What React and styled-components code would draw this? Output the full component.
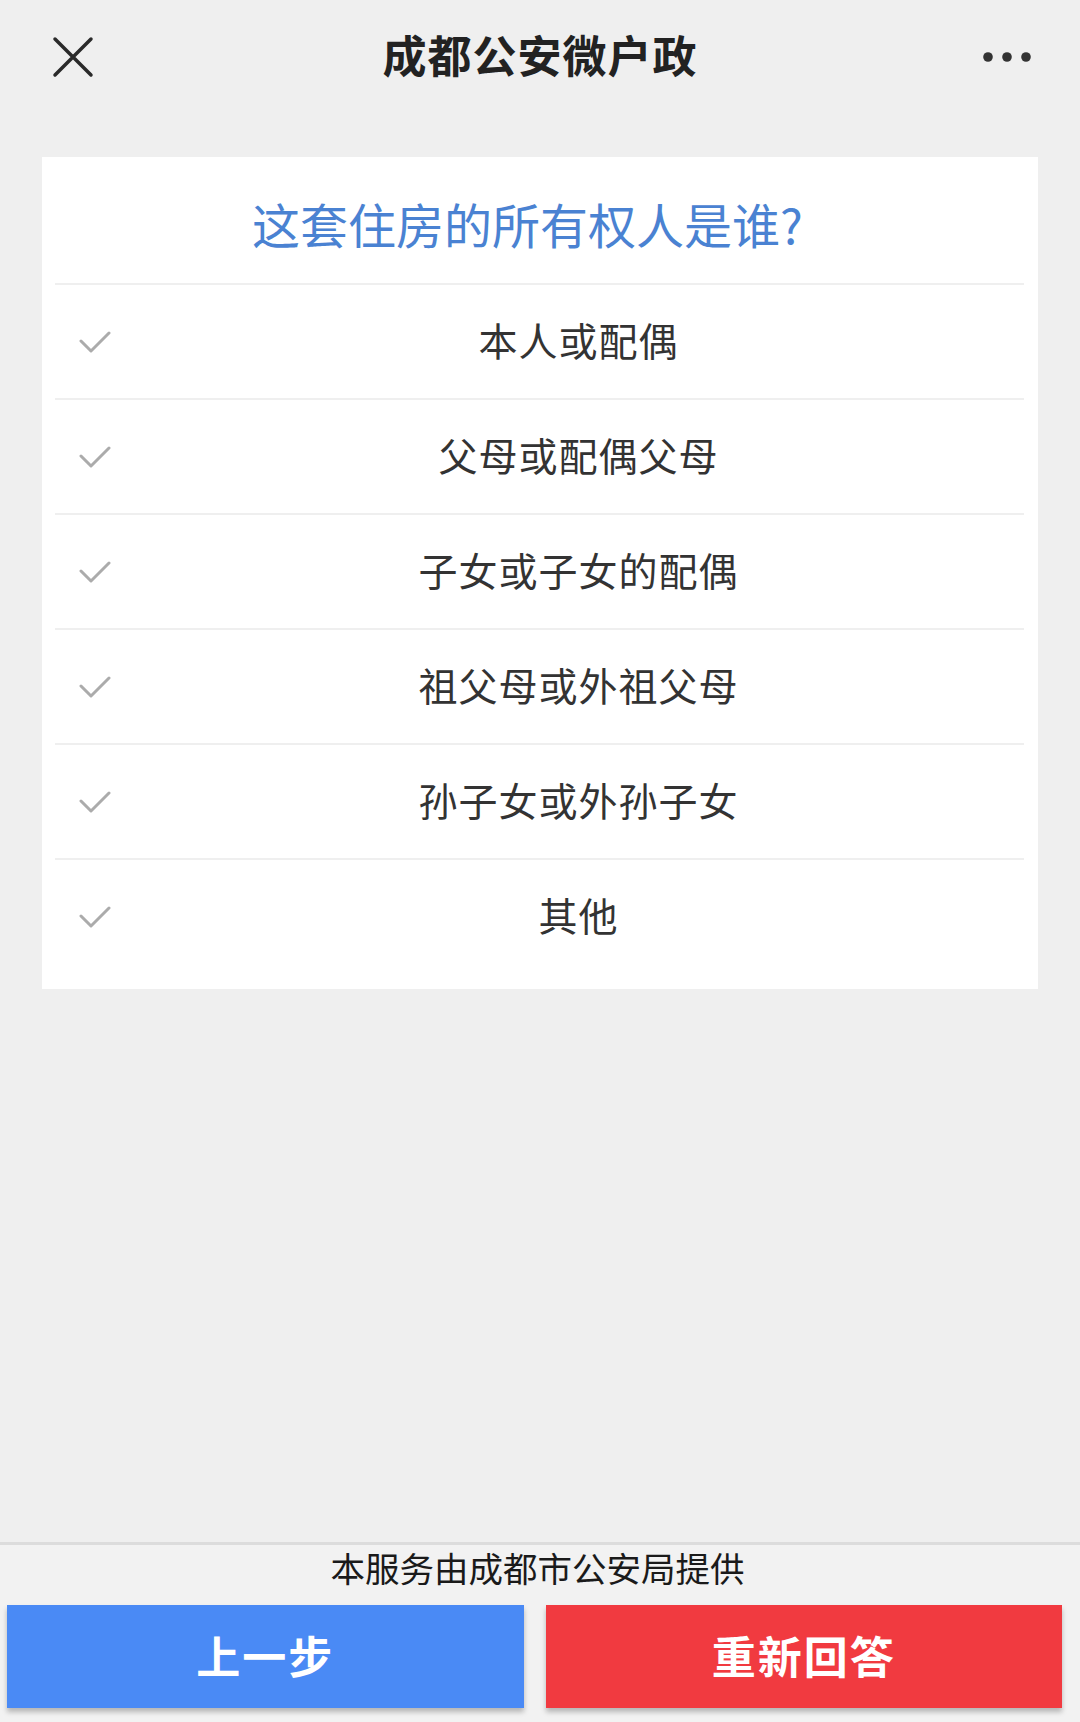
import React from "react";
import styled, { createGlobalStyle } from "styled-components";

const Global = createGlobalStyle`
  html, body { margin: 0; padding: 0; background: #efefef; }
  body { font-family: "Noto Sans CJK SC", "Noto Sans", sans-serif; }
  * { box-sizing: border-box; }
`;

const Page = styled.div`
  min-height: 100vh;
  display: flex;
  flex-direction: column;
  background: #efefef;
`;

const NavBar = styled.header`
  height: 114px;
  display: flex;
  align-items: center;
  justify-content: space-between;
  padding: 0 48px 0 52px;
  position: relative;
`;

const NavTitle = styled.h1`
  position: absolute;
  left: 0;
  right: 0;
  top: 0;
  bottom: 6px;
  margin: 0;
  display: flex;
  align-items: center;
  justify-content: center;
  font-size: 44px;
  font-weight: 700;
  color: #222;
  letter-spacing: 1px;
  pointer-events: none;
`;

const IconBtn = styled.button`
  border: 0;
  background: none;
  padding: 0;
  display: flex;
  align-items: center;
  position: relative;
  z-index: 1;
`;

const Card = styled.section`
  margin: 43px 42px 0;
  background: #fff;
  padding: 0 14px 16px 13px;
`;

const Question = styled.div`
  padding: 36px 24px 30px 0;
  text-align: center;
  font-size: 48px;
  line-height: 60px;
  color: #4a82d2;
`;

const Row = styled.div`
  height: 115px;
  border-top: 2px solid #efefef;
  display: flex;
  align-items: center;
`;

const CheckCell = styled.div`
  width: 78px;
  padding-left: 24px;
  display: flex;
  align-items: center;
`;

const OptionText = styled.div`
  flex: 1;
  text-align: center;
  font-size: 39px;
  color: #333;
  letter-spacing: 1px;
  padding-bottom: 6px;
`;

const Spacer = styled.div`
  flex: 1;
`;

const Footer = styled.footer`
  border-top: 3px solid #dcdcdc;
  background: #f2f2f2;
  padding: 1px 18px 14px 7px;
`;

const Provider = styled.div`
  text-align: center;
  font-size: 34.5px;
  line-height: 42px;
  color: #1a1a1a;
  margin-bottom: 17px;
  padding-left: 6px;
`;

const Buttons = styled.div`
  display: grid;
  grid-template-columns: 1fr 1fr;
  gap: 22px;
`;

const ActionButton = styled.button`
  height: 103px;
  border: 0;
  background: ${(p) => p.$color};
  color: #fff;
  font-family: inherit;
  font-size: 44px;
  font-weight: 700;
  letter-spacing: 2px;
  padding-bottom: 4px;
  box-shadow: 0 4px 5px rgba(0, 0, 0, 0.25);
`;

const Check = () => (
  <svg width="32" height="22" viewBox="0 0 32 22">
    <polyline
      points="2,10 12,20 30,2"
      fill="none"
      stroke="#ababab"
      strokeWidth="3"
      strokeLinecap="round"
      strokeLinejoin="round"
    />
  </svg>
);

const CloseIcon = () => (
  <svg width="42" height="42" viewBox="0 0 42 42">
    <path d="M3 3 L39 39 M39 3 L3 39" stroke="#2a2a2a" strokeWidth="3.5" strokeLinecap="round" />
  </svg>
);

const MoreIcon = () => (
  <svg width="50" height="12" viewBox="0 0 50 12">
    <circle cx="6" cy="6" r="4.8" fill="#333" />
    <circle cx="25" cy="6" r="4.8" fill="#333" />
    <circle cx="44" cy="6" r="4.8" fill="#333" />
  </svg>
);

const options = [
  "本人或配偶",
  "父母或配偶父母",
  "子女或子女的配偶",
  "祖父母或外祖父母",
  "孙子女或外孙子女",
  "其他",
];

export default function App() {
  return (
    <Page>
      <Global />
      <NavBar>
        <IconBtn aria-label="close"><CloseIcon /></IconBtn>
        <NavTitle>成都公安微户政</NavTitle>
        <IconBtn aria-label="more"><MoreIcon /></IconBtn>
      </NavBar>
      <Card>
        <Question>这套住房的所有权人是谁?</Question>
        {options.map((o) => (
          <Row key={o}>
            <CheckCell><Check /></CheckCell>
            <OptionText>{o}</OptionText>
          </Row>
        ))}
      </Card>
      <Spacer />
      <Footer>
        <Provider>本服务由成都市公安局提供</Provider>
        <Buttons>
          <ActionButton $color="#4a8af5">上一步</ActionButton>
          <ActionButton $color="#f13a40">重新回答</ActionButton>
        </Buttons>
      </Footer>
    </Page>
  );
}
